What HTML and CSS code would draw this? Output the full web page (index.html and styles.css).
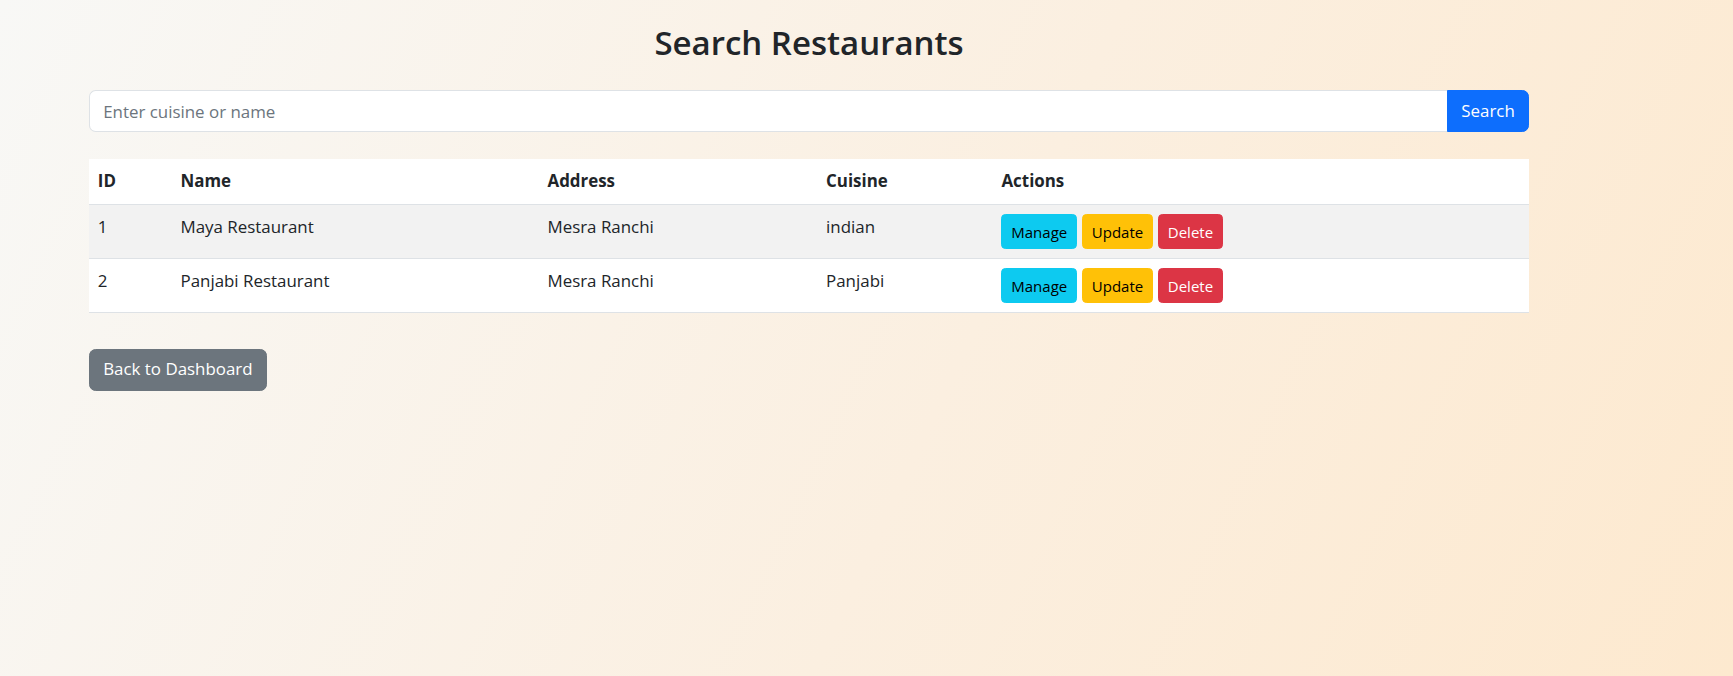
FILE: index.html
```html
<!DOCTYPE html>
<html lang="en">
<head>
<meta charset="utf-8">
<title>Search Restaurants</title>
<link rel="stylesheet" href="styles.css">
</head>
<body>
<div class="container">
  <h1 class="title">Search Restaurants</h1>
  <form class="search">
    <input class="search-input" type="text" placeholder="Enter cuisine or name">
    <button class="btn btn-primary search-btn" type="button">Search</button>
  </form>
  <table class="table">
    <colgroup>
      <col class="c-id"><col class="c-name"><col class="c-addr"><col class="c-cuisine"><col class="c-actions">
    </colgroup>
    <thead>
      <tr><th>ID</th><th>Name</th><th>Address</th><th>Cuisine</th><th>Actions</th></tr>
    </thead>
    <tbody>
      <tr class="odd">
        <td>1</td><td>Maya Restaurant</td><td>Mesra Ranchi</td><td>indian</td>
        <td><div class="actions"><a class="btn btn-sm btn-info">Manage</a><a class="btn btn-sm btn-warning">Update</a><a class="btn btn-sm btn-danger">Delete</a></div></td>
      </tr>
      <tr>
        <td>2</td><td>Panjabi Restaurant</td><td>Mesra Ranchi</td><td>Panjabi</td>
        <td><div class="actions"><a class="btn btn-sm btn-info">Manage</a><a class="btn btn-sm btn-warning">Update</a><a class="btn btn-sm btn-danger">Delete</a></div></td>
      </tr>
    </tbody>
  </table>
  <a class="btn btn-secondary back">Back to Dashboard</a>
</div>
</body>
</html>
```
FILE: styles.css
```css
* { box-sizing: border-box; }
html, body { margin: 0; height: 100%; }
body {
  font-family: "Open Sans", "Noto Sans", sans-serif;
  font-size: 16.9px;
  line-height: 26.4px;
  color: #212529;
  background: linear-gradient(115deg, #f8f8f6 0%, #fbefe0 55%, #fde9cf 100%);
  min-height: 676px;
}
.container {
  width: 1440px;
  margin-left: 89px;
  padding-top: 22px;
}
.title {
  margin: 0 0 26px;
  text-align: center;
  font-size: 33px;
  line-height: 42px;
  font-weight: 600;
  color: #212529;
}
.search {
  display: flex;
  margin: 0 0 27px;
}
.search-input {
  flex: 1;
  height: 42px;
  padding: 6.6px 13.2px;
  font: inherit;
  color: #212529;
  background: #fff;
  border: 1px solid #dee2e6;
  border-right: 0;
  border-radius: 6.6px 0 0 6.6px;
  outline: none;
}
.search-input::placeholder { color: #6c757d; }
.btn {
  display: inline-block;
  font: inherit;
  text-decoration: none;
  border: 1px solid transparent;
  padding: 6.6px 13.2px;
  border-radius: 6.6px;
  cursor: pointer;
}
.btn-primary { background: #0d6efd; border-color: #0d6efd; color: #fff; }
.search-btn {
  height: 42px;
  width: 82px;
  padding: 0;
  border-radius: 0 6.6px 6.6px 0;
}
.table {
  width: 1440px;
  table-layout: fixed;
  border-collapse: collapse;
  background: #fff;
  margin: 0;
}
.c-id { width: 82.7px; }
.c-name { width: 367px; }
.c-addr { width: 278.6px; }
.c-cuisine { width: 175.4px; }
.table th {
  text-align: left;
  font-weight: 700;
  padding: 8.8px 8.8px 9.6px;
  line-height: 26.4px;
  border-bottom: 1px solid #dee2e6;
  vertical-align: top;
}
.table td {
  padding: 9.6px 8.8px 8.6px;
  line-height: 26.4px;
  border-bottom: 1px solid #dee2e6;
  vertical-align: top;
}
.table tr.odd td { background: #f2f2f2; }
.actions { display: flex; gap: 5px; }
.btn-sm {
  font-size: 15px;
  line-height: 24px;
  padding: 4.4px 8.8px;
  border-radius: 4.4px;
  height: 34.8px;
}
.btn-info { background: #0dcaf0; border-color: #0dcaf0; color: #000; }
.btn-warning { background: #ffc107; border-color: #ffc107; color: #000; }
.btn-danger { background: #dc3545; border-color: #dc3545; color: #fff; }
.btn-secondary { background: #6c757d; border-color: #6c757d; color: #fff; }
.back {
  margin-top: 36px;
  line-height: 26.4px;
  height: 42px;
}
```
